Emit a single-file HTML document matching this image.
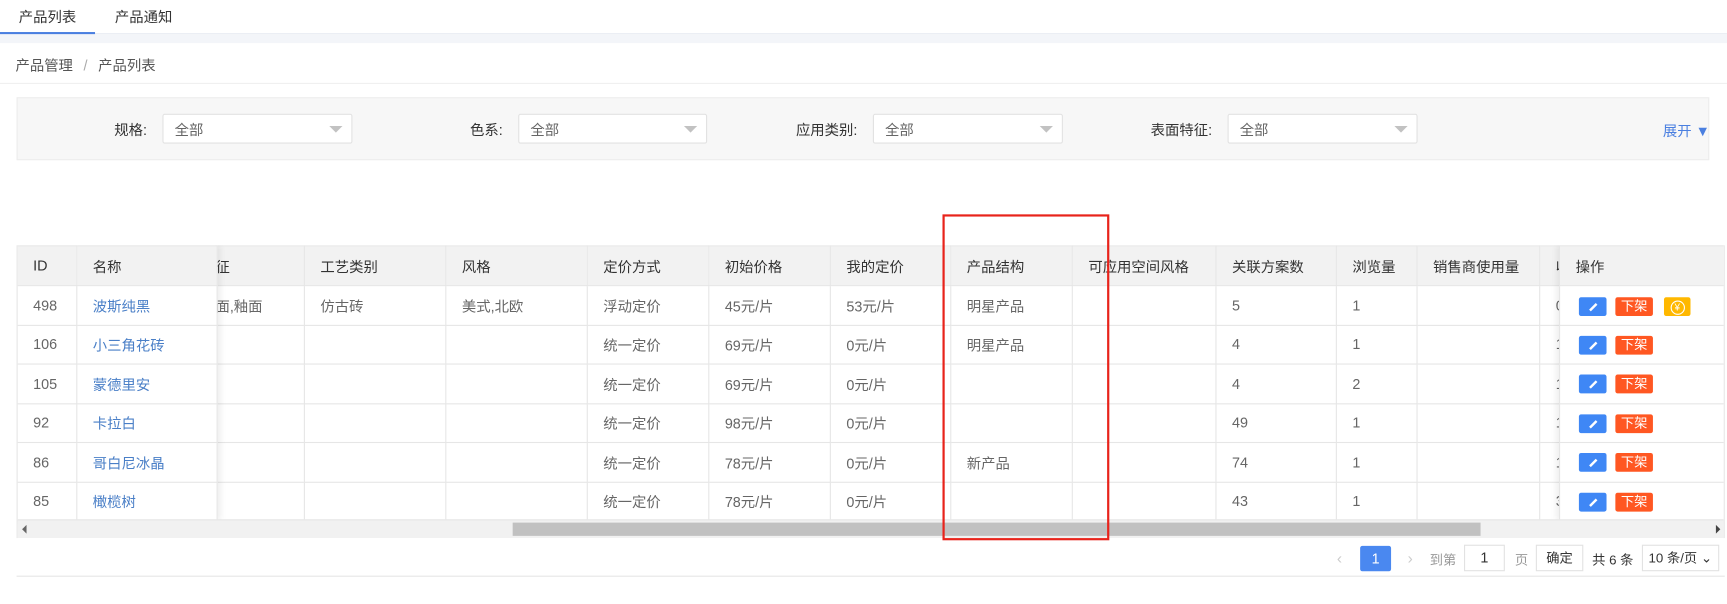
<!DOCTYPE html>
<html><head><meta charset="utf-8"><style>
*{box-sizing:border-box;margin:0;padding:0}
html,body{width:1727px;height:604px;overflow:hidden;background:#fff}
body{font-family:"Liberation Sans","Noto Sans CJK SC",sans-serif;font-size:13px;color:#333}
#s{position:absolute;left:0;top:0;width:1563px;height:547px;transform:scale(1.1049);transform-origin:0 0;background:#fff}
.a{position:absolute}
.sel{position:absolute;top:103px;height:27px;background:#fff;border:1px solid #e2e2e2;border-radius:2px;color:#666;padding-left:10px;line-height:27px}
.sel:after{content:"";position:absolute;right:8px;top:10px;border:6px solid transparent;border-top:6px solid #c2c2c2;border-bottom:0}
.lbl{position:absolute;top:107px;text-align:right;color:#333}
table{border-collapse:collapse;table-layout:fixed}
td,th{border:1px solid #e6e6e6;height:35.5px;padding:0 0 0 14px;text-align:left;font-weight:normal;white-space:nowrap;overflow:hidden;color:#666}
th{background:#f2f2f2;color:#333;height:36px}
.bl{color:#4a7fc7}
.btn{position:absolute;height:17px;border-radius:2px;color:#fff;font-size:12px;line-height:17px;text-align:center}
</style></head><body><div id="s">
<div class="a" style="left:0;top:0;width:1563px;height:31px;border-bottom:1px solid #e8ecf2"></div>
<div class="a" style="left:17px;top:5px">产品列表</div>
<div class="a" style="left:104px;top:5px">产品通知</div>
<div class="a" style="left:0;top:29px;width:86px;height:2px;background:#4a7fe0"></div>
<div class="a" style="left:0;top:31px;width:1563px;height:8px;background:#f3f5f9"></div>
<div class="a" style="left:14px;top:49px;color:#555">产品管理 <span style="color:#aaa;margin:0 6px">/</span> 产品列表</div>
<div class="a" style="left:0;top:75px;width:1563px;height:1px;background:#f0f0f0"></div>
<div class="a" style="left:15px;top:88px;width:1532px;height:57px;background:#f7f7f7;border:1px solid #ededed"></div>
<div class="lbl" style="left:60px;width:73px">规格:</div><div class="sel" style="left:147px;width:172px">全部</div>
<div class="lbl" style="left:380px;width:75px">色系:</div><div class="sel" style="left:469px;width:171px">全部</div>
<div class="lbl" style="left:700px;width:76px">应用类别:</div><div class="sel" style="left:790px;width:172px">全部</div>
<div class="lbl" style="left:1020px;width:77px">表面特征:</div><div class="sel" style="left:1111px;width:172px">全部</div>
<div class="a" style="left:1505px;top:108px;color:#4a7fe0">展开 ▼</div>

<div class="a" style="left:15px;top:222px;width:1546px;height:265px;overflow:hidden;border-left:1px solid #e6e6e6;border-right:1px solid #e6e6e6">
<table class="a" style="left:179px;top:0;width:1400px">
<colgroup><col style="width:80px"><col style="width:128px"><col style="width:128px"><col style="width:110px"><col style="width:110px"><col style="width:109px"><col style="width:110px"><col style="width:130px"><col style="width:109px"><col style="width:73px"><col style="width:111px"><col style="width:202px"></colgroup>
<tr><th style="padding-left:0"><span style="margin-left:-14px">特征</span></th><th>工艺类别</th><th>风格</th><th>定价方式</th><th>初始价格</th><th>我的定价</th><th>产品结构</th><th>可应用空间风格</th><th>关联方案数</th><th>浏览量</th><th>销售商使用量</th><th>收藏量</th></tr>
<tr><td style="padding-left:0"><span style="margin-left:-14px">曲面,釉面</span></td><td>仿古砖</td><td>美式,北欧</td><td>浮动定价</td><td>45元/片</td><td>53元/片</td><td>明星产品</td><td></td><td>5</td><td>1</td><td></td><td>0</td></tr>
<tr><td></td><td></td><td></td><td>统一定价</td><td>69元/片</td><td>0元/片</td><td>明星产品</td><td></td><td>4</td><td>1</td><td></td><td>1</td></tr>
<tr><td></td><td></td><td></td><td>统一定价</td><td>69元/片</td><td>0元/片</td><td></td><td></td><td>4</td><td>2</td><td></td><td>1</td></tr>
<tr><td></td><td></td><td></td><td>统一定价</td><td>98元/片</td><td>0元/片</td><td></td><td></td><td>49</td><td>1</td><td></td><td>1</td></tr>
<tr><td></td><td></td><td></td><td>统一定价</td><td>78元/片</td><td>0元/片</td><td>新产品</td><td></td><td>74</td><td>1</td><td></td><td>1</td></tr>
<tr><td></td><td></td><td></td><td>统一定价</td><td>78元/片</td><td>0元/片</td><td></td><td></td><td>43</td><td>1</td><td></td><td>3</td></tr>
</table>
<table class="a" style="left:-1px;top:0;width:182px;background:#fff;box-shadow:2px 0 6px rgba(0,0,0,.08)">
<colgroup><col style="width:54px"><col style="width:127px"></colgroup>
<tr><th>ID</th><th>名称</th></tr>
<tr><td>498</td><td class="bl">波斯纯黑</td></tr>
<tr><td>106</td><td class="bl">小三角花砖</td></tr>
<tr><td>105</td><td class="bl">蒙德里安</td></tr>
<tr><td>92</td><td class="bl">卡拉白</td></tr>
<tr><td>86</td><td class="bl">哥白尼冰晶</td></tr>
<tr><td>85</td><td class="bl">橄榄树</td></tr>
</table>
<table class="a" style="left:1395px;top:0;width:152px;background:#fff;box-shadow:-2px 0 6px rgba(0,0,0,.08)">
<tr><th>操作</th></tr><tr><td></td></tr><tr><td></td></tr><tr><td></td></tr><tr><td></td></tr><tr><td></td></tr><tr><td></td></tr>
</table>
<div class="a" style="left:0;top:248px;width:1546px;height:17px;background:#f1f1f1;border-top:1px solid #e6e6e6"></div>
<div class="a" style="left:448px;top:251px;width:876px;height:12px;background:#c1c1c1"></div>
<div class="a" style="left:4px;top:253px;border:4px solid transparent;border-right:4px solid #666;border-left:0"></div>
<div class="a" style="left:1537px;top:253px;border:4px solid transparent;border-left:4px solid #444;border-right:0"></div>
</div>
<div id="ops"></div>
<div class="a" style="left:15px;top:521px;width:1546px;height:1px;background:#e6e6e6"></div>

<div class="a" style="left:1210px;top:497px;color:#ccc;font-size:14px">&lsaquo;</div>
<div class="a" style="left:1231px;top:494px;width:28px;height:23px;background:#4a88f0;color:#fff;text-align:center;line-height:23px;border-radius:2px">1</div>
<div class="a" style="left:1274px;top:497px;color:#ccc;font-size:14px">&rsaquo;</div>
<div class="a" style="left:1294px;top:498px;color:#999;font-size:12px">到第</div>
<div class="a" style="left:1325px;top:493px;width:37px;height:24px;border:1px solid #e2e2e2;text-align:center;line-height:22px">1</div>
<div class="a" style="left:1371px;top:498px;color:#999;font-size:12px">页</div>
<div class="a" style="left:1390px;top:493px;width:43px;height:24px;border:1px solid #e2e2e2;text-align:center;line-height:22px;font-size:12px">确定</div>
<div class="a" style="left:1441px;top:498px;font-size:12px">共 6 条</div>
<div class="a" style="left:1486px;top:493px;width:70px;height:24px;border:1px solid #e2e2e2;padding-left:5px;line-height:22px;font-size:12px">10 条/页 ⌄</div>

<div class="a" style="left:853px;top:194px;width:151px;height:295px;border:2px solid #e8231b"></div>
</div>
<script>
var h='',ys=[269,304,339,375,410,446];
ys.forEach(function(y,i){
h+='<div class="btn" style="left:1429px;top:'+y+'px;width:25px;background:#3f87f5"><svg width="12" height="12" viewBox="0 0 12 12" style="margin-top:3px"><path d="M3 9L9 3" stroke="#fff" stroke-width="2.2"/></svg></div>';
h+='<div class="btn" style="left:1462px;top:'+y+'px;width:34px;background:#ff5722">下架</div>';
if(i==0)h+='<div class="btn" style="left:1506px;top:'+y+'px;width:24px;background:#ffb800"><span style="display:inline-block;width:13px;height:13px;border:1px solid #fff;border-radius:50%;font-size:9px;line-height:11px;margin-top:2px">¥</span></div>';
});
document.getElementById('ops').innerHTML=h;
</script>
</body></html>
